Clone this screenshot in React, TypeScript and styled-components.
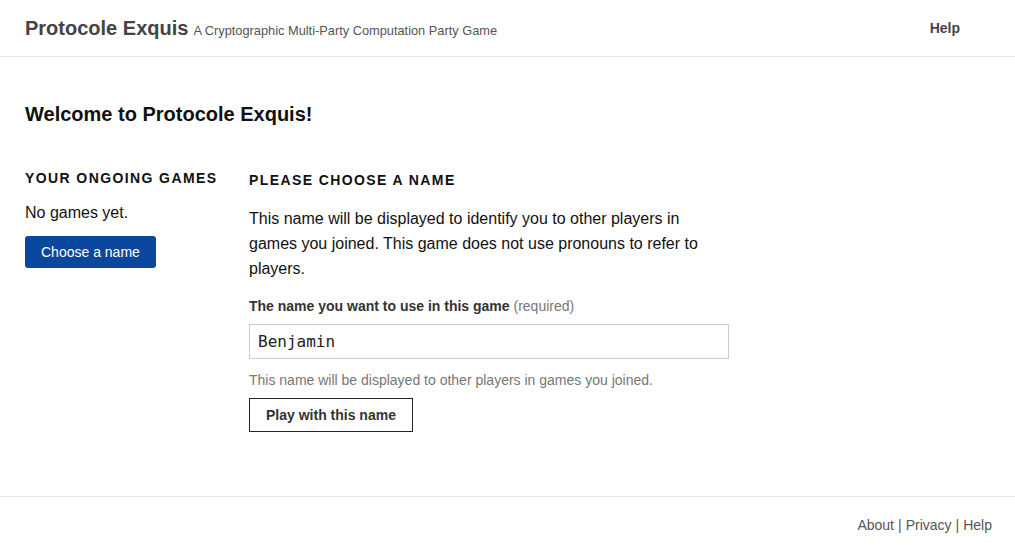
import React, {useState} from 'react';
import styled, {createGlobalStyle} from 'styled-components';

const GlobalStyle = createGlobalStyle`
  html, body {
    margin: 0;
    padding: 0;
    background: #fff;
    font-family: "Liberation Sans", Arial, sans-serif;
    color: #111;
  }
`;

const Page = styled.div`
  display: flex;
  flex-direction: column;
  min-height: 553px;
`;

const Header = styled.header`
  height: 56px;
  border-bottom: 1px solid #e5e5e5;
  display: flex;
  align-items: center;
  justify-content: space-between;
  padding: 0 25px;
`;

const Brand = styled.div`
  display: flex;
  align-items: baseline;
  gap: 5px;
`;

const Title = styled.span`
  font-size: 20px;
  font-weight: bold;
  color: #444;
`;

const Subtitle = styled.span`
  font-size: 12.8px;
  color: #555;
`;

const NavLink = styled.a`
  font-size: 14px;
  font-weight: bold;
  color: #444;
  text-decoration: none;
  margin-right: 30px;
`;

const Main = styled.main`
  flex: 1;
  padding: 46px 25px 0;
`;

const PageTitle = styled.h1`
  margin: 0 0 44px;
  font-size: 20px;
  font-weight: bold;
  color: #111;
`;

const Columns = styled.div`
  display: flex;
  gap: 33px;
`;

const Side = styled.aside`
  width: 191px;
`;

const Content = styled.section`
  width: 480px;
`;

const SectionTitle = styled.h2<{ offset: number }>`
  margin: ${(p) => p.offset}px 0 0;
  font-size: 14px;
  font-weight: bold;
  letter-spacing: 1.4px;
  text-transform: uppercase;
  color: #111;
  white-space: nowrap;
`;

const Text = styled.p<{ gap: number }>`
  margin: ${(p) => p.gap}px 0 0;
  font-size: 16px;
  line-height: 25px;
`;

const PrimaryButton = styled.button`
  margin-top: 11px;
  height: 32px;
  padding: 0 16px;
  background: #0b479d;
  color: #fff;
  border: none;
  border-radius: 3px;
  font-family: inherit;
  font-size: 14px;
`;

const Label = styled.label`
  display: block;
  margin-top: 17px;
  font-size: 14px;
  font-weight: bold;
  color: #333;
`;

const Muted = styled.span`
  font-weight: normal;
  color: #777;
`;

const Input = styled.input`
  display: block;
  box-sizing: border-box;
  width: 480px;
  height: 35px;
  margin-top: 10px;
  padding: 0 8px;
  border: 1px solid #ccc;
  font-family: "DejaVu Sans Mono", monospace;
  font-size: 16px;
  color: #222;
  outline: none;
`;

const Hint = styled.div`
  margin-top: 13px;
  font-size: 14px;
  color: #777;
`;

const SecondaryButton = styled.button`
  margin-top: 10px;
  height: 34px;
  padding: 0 16px;
  background: #fff;
  border: 1px solid #222;
  font-family: inherit;
  font-size: 14px;
  font-weight: bold;
  color: #333;
`;

const Footer = styled.footer`
  border-top: 1px solid #e5e5e5;
  height: 56px;
  display: flex;
  align-items: center;
  justify-content: flex-end;
  padding: 0 23px;
  font-size: 14px;
  color: #555;
`;

const FooterLink = styled.a`
  color: #555;
  text-decoration: none;
`;

const Sep = styled.span`
  margin: 0 4px;
`;

const App = () => {
  const [name, setName] = useState<string>('Benjamin');

  return (
    <Page>
      <GlobalStyle />
      <Header>
        <Brand>
          <Title>Protocole Exquis</Title>
          <Subtitle>A Cryptographic Multi-Party Computation Party Game</Subtitle>
        </Brand>
        <NavLink href="#">Help</NavLink>
      </Header>
      <Main>
        <PageTitle>Welcome to Protocole Exquis!</PageTitle>
        <Columns>
          <Side>
            <SectionTitle offset={0}>Your ongoing games</SectionTitle>
            <Text gap={14}>No games yet.</Text>
            <PrimaryButton>Choose a name</PrimaryButton>
          </Side>
          <Content>
            <SectionTitle offset={2}>Please choose a name</SectionTitle>
            <Text gap={18}>
              This name will be displayed to identify you to other players in games you joined. This game does not use pronouns to refer to players.
            </Text>
            <Label htmlFor="name">
              The name you want to use in this game <Muted>(required)</Muted>
            </Label>
            <Input id="name" value={name} onChange={(e) => setName(e.target.value)} />
            <Hint>This name will be displayed to other players in games you joined.</Hint>
            <SecondaryButton>Play with this name</SecondaryButton>
          </Content>
        </Columns>
      </Main>
      <Footer>
        <FooterLink href="#">About</FooterLink>
        <Sep>|</Sep>
        <FooterLink href="#">Privacy</FooterLink>
        <Sep>|</Sep>
        <FooterLink href="#">Help</FooterLink>
      </Footer>
    </Page>
  );
};

export default App;
